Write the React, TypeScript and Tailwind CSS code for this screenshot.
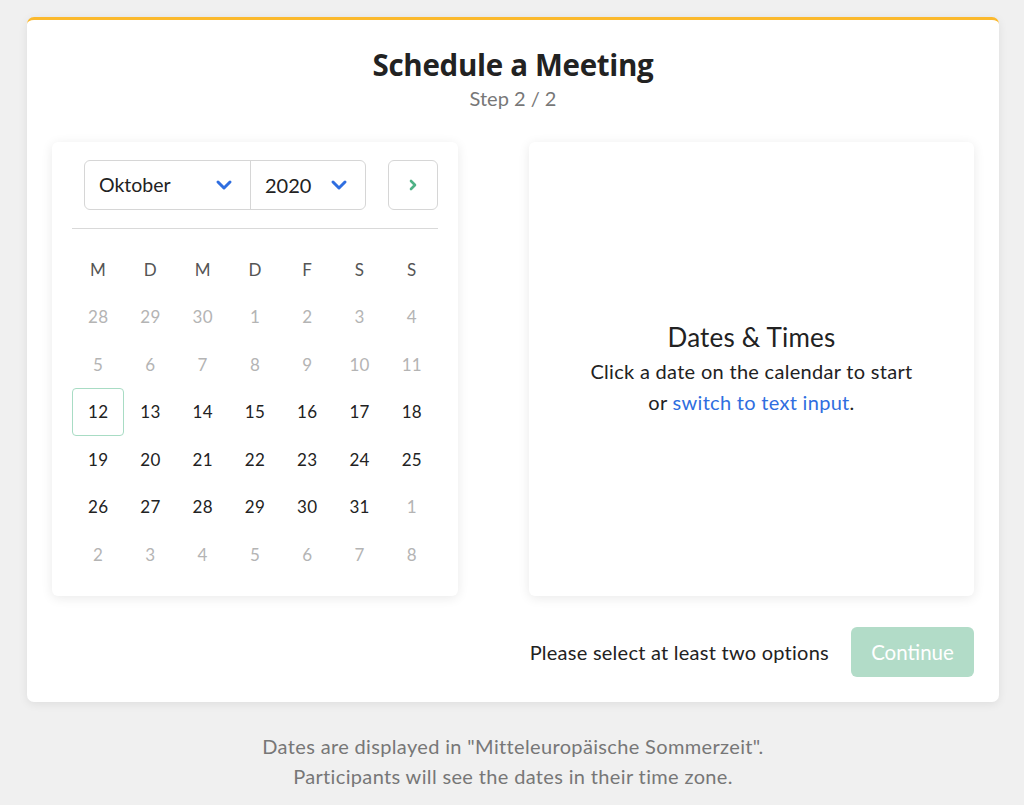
import React from "react";

const WEEKDAYS = ["M", "D", "M", "D", "F", "S", "S"];

const WEEKS: { day: number; muted: boolean }[][] = [
  [28, 29, 30, 1, 2, 3, 4],
  [5, 6, 7, 8, 9, 10, 11],
  [12, 13, 14, 15, 16, 17, 18],
  [19, 20, 21, 22, 23, 24, 25],
  [26, 27, 28, 29, 30, 31, 1],
  [2, 3, 4, 5, 6, 7, 8],
].map((week, wi) =>
  week.map((day) => ({
    day,
    muted: wi < 2 || (wi === 4 && day < 20) || wi === 5,
  }))
);

function ChevronDown() {
  return (
    <svg width="18" height="12" viewBox="0 0 18 12" fill="none" stroke="#2f6ee0" strokeWidth="3" strokeLinecap="round" strokeLinejoin="round">
      <polyline points="3,3 9,9 15,3" />
    </svg>
  );
}

function ChevronRight() {
  return (
    <svg width="10" height="14" viewBox="0 0 10 14" fill="none" stroke="#4fb286" strokeWidth="2.6" strokeLinecap="round" strokeLinejoin="round">
      <polyline points="3,3 7,7 3,11" />
    </svg>
  );
}

function Calendar() {
  return (
    <div className="w-[406px] h-[454px] bg-white rounded-md shadow-[0_2px_12px_rgba(0,0,0,0.09)] pt-[18px] px-5">
      {/* Month / year pickers */}
      <div className="flex items-center pl-3">
        <div className="flex h-[50px] w-[282px] border border-[#d6d6d6] rounded-md">
          <div className="flex items-center justify-between w-[166px] pl-[14px] pr-[17px] border-r border-[#d6d6d6] text-[19.5px] text-[#222]">
            <span>Oktober</span>
            <ChevronDown />
          </div>
          <div className="flex items-center justify-between flex-1 pl-[14px] pr-[17px] text-[20px] text-[#222]">
            <span>2020</span>
            <ChevronDown />
          </div>
        </div>
        <button className="ml-auto flex items-center justify-center w-[50px] h-[50px] border border-[#d6d6d6] rounded-md bg-white">
          <ChevronRight />
        </button>
      </div>

      <div className="mt-[18px] h-px bg-[#d9d9d9]" />

      {/* Weekdays */}
      <div className="grid grid-cols-7 w-[366px] mt-[29px] text-[17px] text-[#555] tracking-[0.3px]">
        {WEEKDAYS.map((d, i) => (
          <div key={i} className="text-center h-[24px] leading-[24px]">
            {d}
          </div>
        ))}
      </div>

      {/* Days */}
      <div className="grid grid-cols-7 w-[366px] mt-[11px] text-[17px] tracking-[0.3px]">
        {WEEKS.flat().map((c, i) => {
          const selected = !c.muted && c.day === 12;
          return (
            <div key={i} className="flex items-center justify-center h-[47.5px]">
              <div
                className={`flex items-center justify-center w-[53px] h-[48px] rounded-[4px] ${
                  selected ? "border border-[#a8dcc4]" : ""
                } ${c.muted ? "text-[#b4b4b4]" : "text-[#222]"}`}
              >
                {c.day}
              </div>
            </div>
          );
        })}
      </div>
    </div>
  );
}

export default function App() {
  return (
    <div className="min-h-[805px] bg-[#f0f0f0] pt-[17px] pl-[27px] pr-[25px] pb-4 font-['Lato',sans-serif]">
      {/* Card */}
      <div className="bg-white rounded-[7px] border-t-[3px] border-[#fbb92d] shadow-[0_2px_10px_rgba(0,0,0,0.08)] pl-[25px] pr-[25px] pb-[25px]">
        <div className="text-center pt-[27px]">
          <h1 className="font-['Open_Sans',sans-serif] font-bold text-[29.5px] leading-[36px] text-[#222] tracking-[-0.3px]">
            Schedule a Meeting
          </h1>
          <p className="text-[20px] leading-[26px] text-[#777] mt-[2px]">Step 2 / 2</p>
        </div>

        <div className="flex justify-between mt-[31px]">
          <Calendar />

          {/* Dates & Times panel */}
          <div className="w-[445px] h-[454px] bg-white rounded-md shadow-[0_2px_12px_rgba(0,0,0,0.09)] flex flex-col items-center justify-center text-center">
            <h2 className="text-[26px] leading-[32px] text-[#222] tracking-[0.2px]">Dates &amp; Times</h2>
            <p className="text-[20px] leading-[31px] text-[#222] tracking-[0.3px] mt-[3px]">
              Click a date on the calendar to start
              <br />
              or <a className="text-[#2f6ee0]">switch to text input</a>.
            </p>
          </div>
        </div>

        <div className="flex items-center justify-end mt-[31px]">
          <span className="text-[20px] text-[#222] mr-[22px] tracking-[0.25px]">Please select at least two options</span>
          <button className="w-[123px] h-[50px] rounded-md bg-[#b2dcc8] text-white text-[20.5px]">Continue</button>
        </div>
      </div>

      <div className="text-center text-[20px] leading-[30px] text-[#777] mt-[29px] tracking-[0.35px]">
        <p>Dates are displayed in "Mitteleuropäische Sommerzeit".</p>
        <p>Participants will see the dates in their time zone.</p>
      </div>
    </div>
  );
}
